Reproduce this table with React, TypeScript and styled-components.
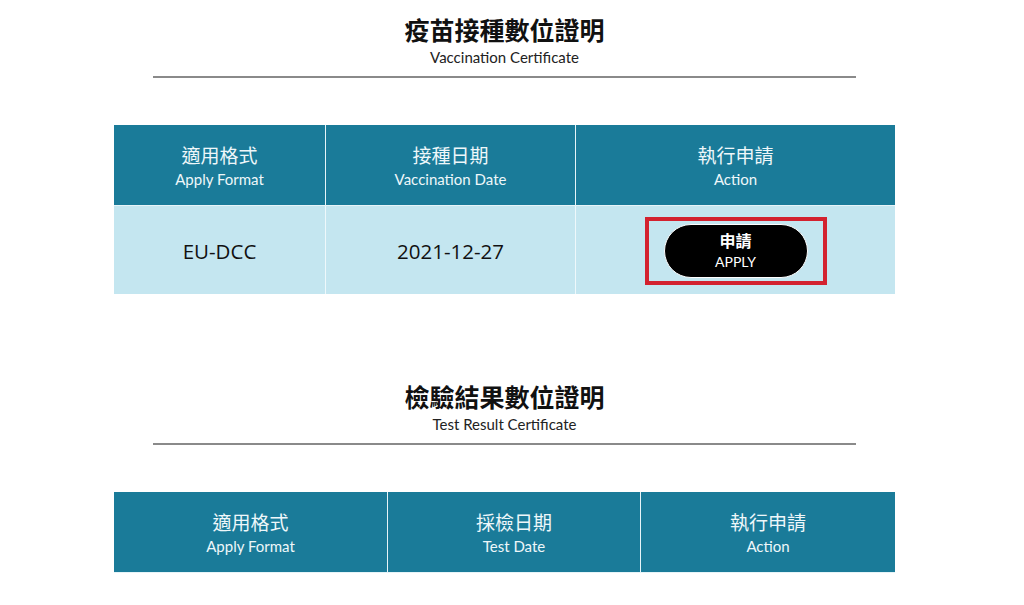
import styled, { createGlobalStyle } from 'styled-components';

const GlobalStyle = createGlobalStyle`
  body {
    margin: 0;
    background: #ffffff;
    font-family: Lato, 'Noto Sans CJK TC', sans-serif;
    color: #111111;
  }
`;

const Page = styled.main`
  width: 1009px;
  display: flex;
  flex-direction: column;
  align-items: center;
  padding-top: 13px;
`;

const Section = styled.section<{ $gap: number }>`
  display: flex;
  flex-direction: column;
  align-items: center;
  margin-top: ${(props) => props.$gap}px;
`;

const Heading = styled.header`
  width: 703px;
  display: flex;
  flex-direction: column;
  align-items: center;
  padding-bottom: 8px;
  border-bottom: 2px solid #8a8a8a;
`;

const Title = styled.h2`
  margin: 0;
  font-family: 'Noto Sans CJK TC', sans-serif;
  font-size: 25px;
  font-weight: 700;
  line-height: 32px;
  color: #111111;
`;

const Subtitle = styled.p`
  margin: 1px 0 0;
  font-size: 15px;
  line-height: 22px;
  color: #222222;
`;

const Table = styled.div<{ $cols: string }>`
  display: grid;
  grid-template-columns: ${(props) => props.$cols};
  width: 781px;
  margin-top: 47px;
`;

const HeadCell = styled.div<{ $last?: boolean }>`
  height: 81px;
  display: flex;
  flex-direction: column;
  align-items: center;
  justify-content: center;
  padding-top: 2px;
  box-sizing: border-box;
  background: #1a7b99;
  color: #eef7fa;
  border-right: ${(props) => (props.$last ? 'none' : '1px solid #e6f4f8')};
  border-bottom: 1px solid #e6f4f8;
`;

const HeadZh = styled.span`
  font-family: 'Noto Sans CJK TC', sans-serif;
  font-size: 19px;
  line-height: 26px;
`;

const HeadEn = styled.span`
  font-size: 15px;
  line-height: 22px;
`;

const BodyCell = styled.div<{ $last?: boolean }>`
  height: 88px;
  display: flex;
  align-items: center;
  justify-content: center;
  padding-top: 2px;
  box-sizing: border-box;
  background: #c4e6f0;
  font-family: 'Open Sans', 'Noto Sans CJK TC', sans-serif;
  font-size: 20.5px;
  color: #111111;
  border-right: ${(props) => (props.$last ? 'none' : '1px solid #eef8fb')};
`;

const Highlight = styled.div`
  display: flex;
  padding: 3px 15px;
  border: 4px solid #d3222f;
`;

const ApplyButton = styled.button`
  width: 144px;
  height: 54px;
  display: flex;
  flex-direction: column;
  align-items: center;
  justify-content: center;
  background: #000000;
  color: #ffffff;
  border: 1px solid #ffffff;
  border-radius: 27px;
  cursor: pointer;
  padding: 0;
`;

const ButtonZh = styled.span`
  font-family: 'Noto Sans CJK TC', sans-serif;
  font-size: 16px;
  font-weight: 700;
  line-height: 22px;
`;

const ButtonEn = styled.span`
  font-family: Lato, sans-serif;
  font-size: 14px;
  line-height: 22px;
`;

type Column = { zh: string; en: string };

const HeaderRow = ({ columns }: { columns: Column[] }) => (
  <>
    {columns.map((col, i) => (
      <HeadCell key={col.en} $last={i === columns.length - 1}>
        <HeadZh>{col.zh}</HeadZh>
        <HeadEn>{col.en}</HeadEn>
      </HeadCell>
    ))}
  </>
);

const vaccineColumns: Column[] = [
  { zh: '適用格式', en: 'Apply Format' },
  { zh: '接種日期', en: 'Vaccination Date' },
  { zh: '執行申請', en: 'Action' },
];

const testColumns: Column[] = [
  { zh: '適用格式', en: 'Apply Format' },
  { zh: '採檢日期', en: 'Test Date' },
  { zh: '執行申請', en: 'Action' },
];

const App = () => {
  return (
    <>
      <GlobalStyle />
      <Page>
        <Section $gap={0}>
          <Heading>
            <Title>疫苗接種數位證明</Title>
            <Subtitle>Vaccination Certificate</Subtitle>
          </Heading>
          <Table $cols="212px 250px 319px">
            <HeaderRow columns={vaccineColumns} />
            <BodyCell>EU-DCC</BodyCell>
            <BodyCell>2021-12-27</BodyCell>
            <BodyCell $last>
              <Highlight>
                <ApplyButton>
                  <ButtonZh>申請</ButtonZh>
                  <ButtonEn>APPLY</ButtonEn>
                </ApplyButton>
              </Highlight>
            </BodyCell>
          </Table>
        </Section>

        <Section $gap={86}>
          <Heading>
            <Title>檢驗結果數位證明</Title>
            <Subtitle>Test Result Certificate</Subtitle>
          </Heading>
          <Table $cols="274px 253px 254px">
            <HeaderRow columns={testColumns} />
          </Table>
        </Section>
      </Page>
    </>
  );
};

export default App;
